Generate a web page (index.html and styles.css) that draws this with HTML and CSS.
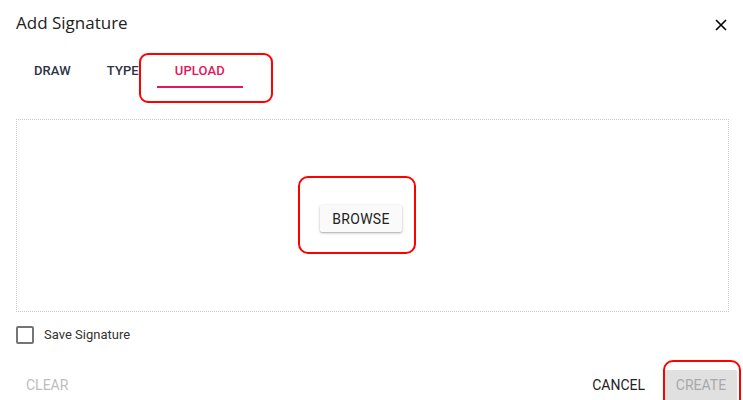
FILE: index.html
```html
<!DOCTYPE html>
<html>
<head>
<meta charset="utf-8">
<link rel="stylesheet" href="styles.css">
</head>
<body>
<div class="dialog">
  <div class="header">
    <div class="title">Add Signature</div>
    <button class="close" aria-label="Close">
      <svg width="12" height="12" viewBox="0 0 12 12"><path d="M1 1L11 11M11 1L1 11" stroke="#000" stroke-width="1.6" fill="none"/></svg>
    </button>
  </div>
  <div class="tabs">
    <div class="tab">DRAW</div>
    <div class="tab">TYPE</div>
    <div class="tab active">UPLOAD</div>
    <div class="mark mark-tab"></div>
  </div>
  <div class="droparea">
    <div class="browse-wrap">
      <button class="browse">BROWSE</button>
      <div class="mark mark-browse"></div>
    </div>
  </div>
  <label class="save">
    <span class="checkbox"></span>
    <span class="save-label">Save Signature</span>
  </label>
  <div class="footer">
    <button class="flat clear">CLEAR</button>
    <div class="actions">
      <button class="flat cancel">CANCEL</button>
      <div class="create-wrap">
        <button class="create">CREATE</button>
        <div class="mark mark-create"></div>
      </div>
    </div>
  </div>
</div>
</body>
</html>
```

FILE: styles.css
```css
html, body {
  margin: 0;
  padding: 0;
  background: #fff;
}
body {
  font-family: Roboto, "Liberation Sans", sans-serif;
  color: #333;
  width: 743px;
  height: 400px;
  overflow: hidden;
}
.dialog {
  padding: 0 6px 0 16px;
}
.header {
  display: flex;
  justify-content: space-between;
  align-items: center;
  padding-top: 10px;
  height: 26px;
}
.title {
  font-family: "Segoe UI", "Open Sans", "Noto Sans", sans-serif;
  font-size: 17px;
  line-height: 26px;
  color: #222;
}
.close {
  border: 0;
  background: none;
  padding: 0;
  width: 12px;
  height: 12px;
  margin-right: 10px;
  margin-top: 4px;
  display: flex;
}
.tabs {
  position: relative;
  display: flex;
  margin-top: 18px;
  height: 34px;
}
.tab {
  padding: 0 18px;
  font-size: 13px;
  font-weight: 500;
  line-height: 34px;
  color: #2d3346;
  letter-spacing: 0.1px;
}
.tab.active {
  color: #e3165b;
  box-shadow: inset 0 -2px 0 #e3165b;
}
.mark {
  position: absolute;
  border: 2px solid #ff0000;
  border-radius: 9px;
  pointer-events: none;
}
.mark-tab {
  left: 123px;
  top: -1px;
  width: 130px;
  height: 46px;
}
.droparea {
  margin-top: 31px;
  margin-right: 8px;
  border: 1px dotted #c8c8c8;
  display: flex;
  justify-content: center;
  align-items: center;
  padding: 6px 23px 0 0;
  box-sizing: border-box;
  height: 193px;
}
.browse-wrap {
  position: relative;
}
.browse {
  border: 0;
  background: #fafafa;
  font-family: Roboto, sans-serif;
  font-weight: 400;
  font-size: 14px;
  letter-spacing: 0.3px;
  color: #222;
  height: 27px;
  width: 82px;
  border-radius: 2px;
  box-shadow: 0 1px 3px rgba(0,0,0,0.25), 0 1px 1px rgba(0,0,0,0.12);
  padding: 0;
  display: block;
}
.mark-browse {
  left: -22px;
  top: -29px;
  width: 114px;
  height: 74px;
  border-radius: 10px;
}
.save {
  display: flex;
  align-items: center;
  margin-top: 13px;
  height: 19px;
}
.checkbox {
  width: 14px;
  height: 14px;
  border: 2px solid #757575;
  border-radius: 2px;
  margin-left: 0;
}
.save-label {
  font-size: 13px;
  margin-left: 10px;
  color: #333;
}
.footer {
  display: flex;
  justify-content: space-between;
  align-items: center;
  margin-top: 26px;
  height: 30px;
}
.flat {
  border: 0;
  background: none;
  font-family: Roboto, sans-serif;
  font-weight: 400;
  font-size: 14px;
  padding: 0;
}
.clear {
  color: #bdbdbd;
  margin-left: 10px;
}
.cancel {
  color: #222;
  margin-right: 20px;
}
.actions {
  display: flex;
  align-items: center;
}
.create-wrap {
  position: relative;
}
.create {
  border: 0;
  background: #e0e0e0;
  color: #a8a8a8;
  font-family: Roboto, sans-serif;
  font-weight: 400;
  font-size: 14px;
  width: 72px;
  height: 36px;
  margin-top: 6px;
  padding: 0 0 6px 0;
  border-radius: 2px;
  display: block;
}
.mark-create {
  left: -2px;
  top: -4px;
  width: 74px;
  height: 46px;
  border-radius: 10px;
}
```
